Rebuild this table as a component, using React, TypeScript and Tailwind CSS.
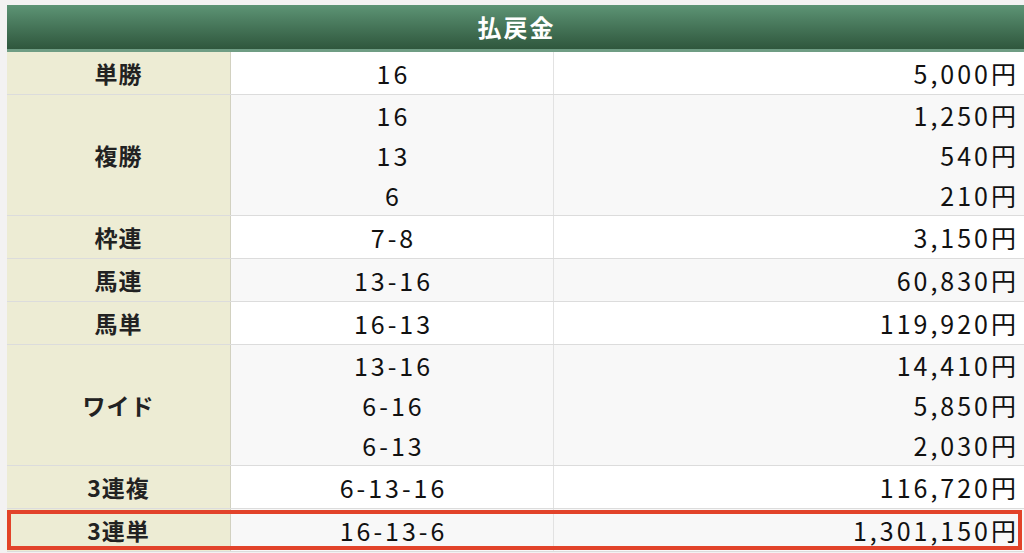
const rows: { label: string; nums: string[]; pays: string[]; alt: boolean; hit?: boolean }[] = [
  { label: '単勝', nums: ['16'], pays: ['5,000円'], alt: false },
  { label: '複勝', nums: ['16', '13', '6'], pays: ['1,250円', '540円', '210円'], alt: true },
  { label: '枠連', nums: ['7-8'], pays: ['3,150円'], alt: false },
  { label: '馬連', nums: ['13-16'], pays: ['60,830円'], alt: true },
  { label: '馬単', nums: ['16-13'], pays: ['119,920円'], alt: false },
  { label: 'ワイド', nums: ['13-16', '6-16', '6-13'], pays: ['14,410円', '5,850円', '2,030円'], alt: true },
  { label: '3連複', nums: ['6-13-16'], pays: ['116,720円'], alt: false },
  { label: '3連単', nums: ['16-13-6'], pays: ['1,301,150円'], alt: true, hit: true },
]

export default function App() {
  return (
    <div
      className="h-[553px] overflow-hidden bg-[#f3f2f2] pt-[5px] pl-[7px]"
      style={{ fontFamily: '"Noto Sans CJK JP", "Noto Sans", sans-serif' }}
    >
      <div className="w-[1017px] bg-white">
        <div className="h-[47px] border-b-[3px] border-[#6f9d84] bg-gradient-to-b from-[#5d9475] to-[#2f573d] flex items-center justify-center">
          <span className="text-white text-[24px] font-bold leading-none tracking-[2px] pl-[2px]">払戻金</span>
        </div>

        {rows.map((r) => (
          <div
            key={r.label}
            className={`relative flex border-b border-[#dcdcdc] ${r.nums.length > 1 ? 'h-[121px]' : 'h-[43px]'} ${r.alt ? 'bg-[#f8f8f8]' : 'bg-white'}`}
          >
            <div className="w-[224px] shrink-0 bg-[#edecd4] border-r border-[#d2d1c0] flex items-center justify-center text-[23px] font-bold tracking-[1px] text-[#222]">
              {r.label}
            </div>
            <div className="w-[323px] shrink-0 border-r border-[#e2e2e2] flex flex-col justify-center text-center text-[25px] tracking-[3px] pl-[3px] text-[#111]">
              {r.nums.map((n) => (
                <div key={n} className="h-[40px] leading-[40px]">{n}</div>
              ))}
            </div>
            <div className="flex-1 flex flex-col justify-center pr-[5px] text-right text-[25px] tracking-[3px] text-[#111]">
              {r.pays.map((p) => (
                <div key={p} className="h-[40px] leading-[40px]">{p}</div>
              ))}
            </div>
            {r.hit && (
              <div className="absolute left-0 top-px w-[1015px] h-[40px] border-4 border-[#e2432a] pointer-events-none" />
            )}
          </div>
        ))}
      </div>
    </div>
  )
}
